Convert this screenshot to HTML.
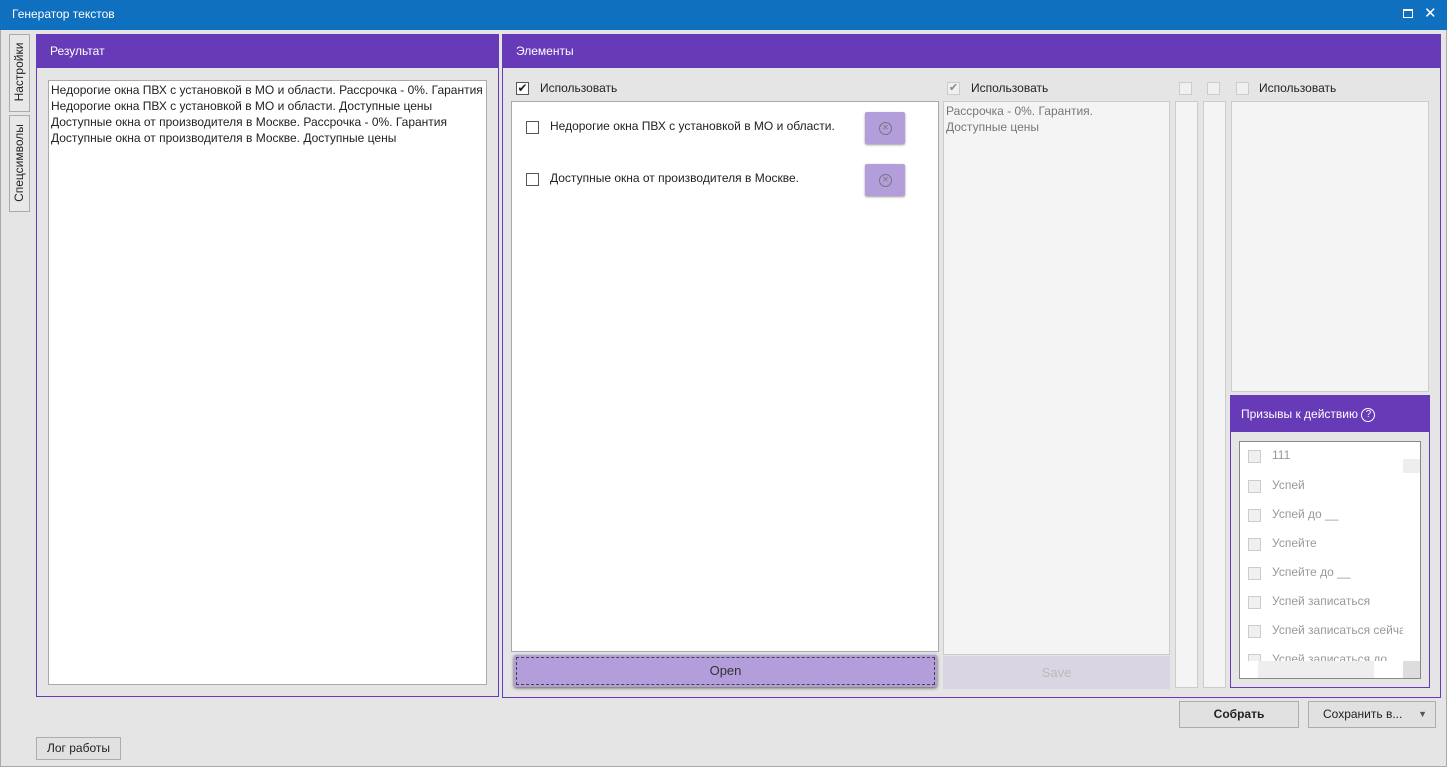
<!DOCTYPE html>
<html><head><meta charset="utf-8"><style>
*{box-sizing:border-box;margin:0;padding:0}
body{width:1447px;height:767px;overflow:hidden;background:#e5e5e5;font-family:"Segoe UI","Liberation Sans","DejaVu Sans",sans-serif;font-size:12px;color:#222;position:relative}
.a{position:absolute}
.cb{position:absolute;width:13px;height:13px;border:1px solid #555;background:#fff}
.cbg{position:absolute;width:13px;height:13px;border:1px solid #ccc;background:#f0f0f0}
.hdr{position:absolute;background:#673ab7;color:#fff;padding-left:13px;line-height:33px;font-size:12px}
.btn{position:absolute;border:1px solid #adadad;background:#e1e1e1;text-align:center;font-size:12px}
.li{position:absolute;left:9px;color:#999;font-size:12px}
</style></head><body>
<div class="a" style="left:0;top:0;width:1447px;height:30px;background:#1070c0"></div>
<div class="a" style="left:12px;top:7px;color:#fff;font-size:12px">Генератор текстов</div>
<div class="a" style="left:1403px;top:9px;width:10px;height:9px;border:1px solid #fff;border-top-width:2px"></div>
<div class="a" style="left:1424px;top:4px;color:#fff;font-size:15px;font-weight:bold">✕</div>
<div class="a" style="left:0;top:30px;width:1447px;height:737px;border:1px solid #aaa;border-top:none"></div>

<div class="a" style="left:9px;top:34px;width:21px;height:78px;border:1px solid #aaa;background:#e8e8e8"></div>
<div class="a" style="left:9px;top:100px;width:78px;transform-origin:0 0;transform:rotate(-90deg);text-align:center;line-height:21px;top:111px">Настройки</div>
<div class="a" style="left:9px;top:115px;width:21px;height:97px;border:1px solid #aaa;background:#e8e8e8"></div>
<div class="a" style="left:9px;top:211px;width:96px;transform-origin:0 0;transform:rotate(-90deg);text-align:center;line-height:21px">Спецсимволы</div>

<div class="a" style="left:36px;top:34px;width:463px;height:663px;border:1px solid #673ab7"></div>
<div class="hdr" style="left:37px;top:35px;width:461px">Результат</div>
<div class="a" style="left:48px;top:80px;width:439px;height:605px;border:1px solid #aaa;background:#fff;padding:1px 2px;line-height:16px">Недорогие окна ПВХ с установкой в МО и области. Рассрочка - 0%. Гарантия<br>Недорогие окна ПВХ с установкой в МО и области. Доступные цены<br>Доступные окна от производителя в Москве. Рассрочка - 0%. Гарантия<br>Доступные окна от производителя в Москве. Доступные цены</div>

<div class="a" style="left:502px;top:34px;width:939px;height:664px;border:1px solid #673ab7"></div>
<div class="hdr" style="left:503px;top:35px;width:937px">Элементы</div>

<div class="cb" style="left:516px;top:82px;font-size:12px;line-height:10px;text-align:center">✔</div>
<div class="a" style="left:540px;top:81px">Использовать</div>
<div class="a" style="left:511px;top:101px;width:428px;height:551px;border:1px solid #aaa;background:#fff"></div>
<div class="cb" style="left:526px;top:121px"></div>
<div class="a" style="left:550px;top:119px">Недорогие окна ПВХ с установкой в МО и области.</div>
<div class="a" style="left:865px;top:112px;width:40px;height:32px;background:#b39ddb;border-radius:2px;box-shadow:0 1px 2px #999"></div>
<div class="a" style="left:879px;top:122px;width:13px;height:13px;border:1.5px solid #777;border-radius:50%;color:#777;font-size:8px;line-height:10px;text-align:center;font-weight:bold">✕</div>
<div class="cb" style="left:526px;top:173px"></div>
<div class="a" style="left:550px;top:171px">Доступные окна от производителя в Москве.</div>
<div class="a" style="left:865px;top:164px;width:40px;height:32px;background:#b39ddb;border-radius:2px;box-shadow:0 1px 2px #999"></div>
<div class="a" style="left:879px;top:174px;width:13px;height:13px;border:1.5px solid #777;border-radius:50%;color:#777;font-size:8px;line-height:10px;text-align:center;font-weight:bold">✕</div>
<div class="a" style="left:514px;top:655px;width:423px;height:32px;background:#b39ddb;box-shadow:0 1px 3px #555;border-radius:2px"></div>
<div class="a" style="left:516px;top:657px;width:419px;height:28px;border:1px dashed #444;text-align:center;line-height:26px;font-size:13px;color:#333">Open</div>

<div class="cbg" style="left:947px;top:82px;font-size:11px;line-height:10px;text-align:center;color:#888">✔</div>
<div class="a" style="left:971px;top:81px">Использовать</div>
<div class="a" style="left:943px;top:101px;width:227px;height:554px;border:1px solid #ccc;background:#f4f4f4;color:#777;padding:1px 2px;line-height:16px">Рассрочка - 0%. Гарантия.<br>Доступные цены</div>
<div class="a" style="left:943px;top:656px;width:227px;height:33px;background:#d9d5e3;color:#bbb;text-align:center;line-height:33px;font-size:13px">Save</div>

<div class="cbg" style="left:1179px;top:82px"></div>
<div class="a" style="left:1175px;top:101px;width:23px;height:587px;border:1px solid #ccc;background:#f4f4f4"></div>
<div class="cbg" style="left:1207px;top:82px"></div>
<div class="a" style="left:1203px;top:101px;width:23px;height:587px;border:1px solid #ccc;background:#f4f4f4"></div>
<div class="cbg" style="left:1236px;top:82px"></div>
<div class="a" style="left:1259px;top:81px">Использовать</div>
<div class="a" style="left:1231px;top:101px;width:198px;height:291px;border:1px solid #ccc;background:#f4f4f4"></div>

<div class="a" style="left:1230px;top:395px;width:200px;height:293px;border:1px solid #673ab7"></div>
<div class="hdr" style="left:1231px;top:396px;width:198px;line-height:36px;height:36px;padding-left:10px">Призывы к действию <span style="display:inline-block;width:14px;height:14px;border:1px solid #fff;border-radius:50%;font-size:10px;line-height:12px;text-align:center;vertical-align:1px">?</span></div>
<div class="a" style="left:1239px;top:441px;width:182px;height:238px;border:1px solid #888;background:#fff;overflow:hidden">
<div class="cbg" style="left:8px;top:8px"></div><div class="li" style="left:32px;top:6px">111</div>
<div class="cbg" style="left:8px;top:38px"></div><div class="li" style="left:32px;top:36px">Успей</div>
<div class="cbg" style="left:8px;top:67px"></div><div class="li" style="left:32px;top:65px">Успей до __</div>
<div class="cbg" style="left:8px;top:96px"></div><div class="li" style="left:32px;top:94px">Успейте</div>
<div class="cbg" style="left:8px;top:125px"></div><div class="li" style="left:32px;top:123px">Успейте до __</div>
<div class="cbg" style="left:8px;top:154px"></div><div class="li" style="left:32px;top:152px">Успей записаться</div>
<div class="cbg" style="left:8px;top:183px"></div><div class="li" style="left:32px;top:181px;white-space:nowrap;width:140px;overflow:hidden">Успей записаться сейчас</div>
<div class="cbg" style="left:8px;top:212px"></div><div class="li" style="left:32px;top:210px;white-space:nowrap">Успей записаться до</div>
<div class="a" style="left:163px;top:0;width:17px;height:236px;background:#fff"></div>
<div class="a" style="left:163px;top:17px;width:17px;height:14px;background:#eee"></div>
<div class="a" style="left:0;top:219px;width:180px;height:17px;background:#fff"></div>
<div class="a" style="left:18px;top:219px;width:116px;height:17px;background:#eee"></div>
<div class="a" style="left:163px;top:219px;width:17px;height:17px;background:#ddd"></div>
</div>

<div class="btn" style="left:1179px;top:701px;width:120px;height:27px;line-height:25px;font-weight:bold">Собрать</div>
<div class="btn" style="left:1308px;top:701px;width:128px;height:27px;line-height:25px;text-align:left;padding-left:14px">Сохранить в...<span style="position:absolute;right:8px;top:0;font-size:9px;color:#555">▼</span></div>
<div class="btn" style="left:36px;top:737px;width:85px;height:23px;line-height:21px">Лог работы</div>
</body></html>
